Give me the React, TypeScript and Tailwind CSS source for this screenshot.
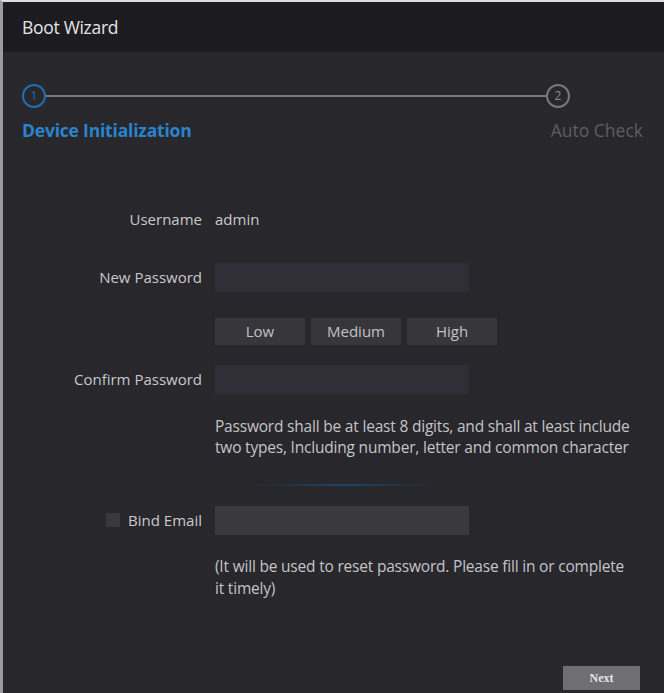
const labelCls = "w-[199px] shrink-0 text-right text-[15px] text-[#c9c9cc]";

function Field({ label, children }: { label: React.ReactNode; children: React.ReactNode }) {
  return (
    <div className="flex items-center">
      <div className={labelCls}>{label}</div>
      <div className="ml-[13px] flex items-center">{children}</div>
    </div>
  );
}

function Stepper() {
  return (
    <div className="pl-[19px] pr-[21px] pt-[32px]">
      <div className="flex items-center">
        <div className="flex h-[24px] w-[24px] items-center justify-center rounded-full border-2 border-[#1f6fae] text-[12px] text-[#1f6fae]">
          1
        </div>
        <div className="h-[2px] w-[500px] bg-[#77777c]" />
        <div className="flex h-[24px] w-[24px] items-center justify-center rounded-full border-2 border-[#77777c] text-[12px] text-[#8a8a8e]">
          2
        </div>
      </div>
      <div className="mt-[9px] flex items-center justify-between">
        <span className="text-[17.5px] font-bold tracking-[-0.2px] text-[#2a84cc]">Device Initialization</span>
        <span className="text-[17.5px] text-[#5d5d62]">Auto Check</span>
      </div>
    </div>
  );
}

export default function App() {
  const strength = ["Low", "Medium", "High"];

  return (
    <div
      className="flex h-[693px] w-[664px] flex-col border-t-2 border-l-[3px] border-t-[#dcdcdc] border-l-[#9c9c9f] bg-[#28272c]"
      style={{ fontFamily: '"Open Sans", "Liberation Sans", sans-serif' }}
    >
      <header className="flex h-[50px] shrink-0 items-center bg-[#1c1b1f] px-[19px]">
        <h1 className="text-[17.5px] tracking-[-0.3px] text-[#e4e4e6]">Boot Wizard</h1>
      </header>

      <Stepper />

      <main className="mt-[65px] flex flex-1 flex-col">
        <Field label="Username">
          <span className="text-[15px] text-[#c9c9cc]">admin</span>
        </Field>

        <div className="mt-[32px]">
          <Field label="New Password">
            <div className="h-[29px] w-[254px] bg-[#302f38]" />
          </Field>
        </div>

        <div className="mt-[26px] flex gap-[6px] pl-[212px]">
          {strength.map((s) => (
            <div
              key={s}
              className="flex h-[27px] w-[90px] items-center justify-center bg-[#37363b] text-[15px] text-[#c2c2c5]"
            >
              {s}
            </div>
          ))}
        </div>

        <div className="mt-[20px]">
          <Field label="Confirm Password">
            <div className="h-[29px] w-[254px] bg-[#302f38]" />
          </Field>
        </div>

        <p className="mt-[22px] pl-[212px] pr-[18px] text-[15.5px] leading-[21px] tracking-[-0.2px] text-[#c4c4c7]">
          Password shall be at least 8 digits, and shall at least include two types, Including number, letter and
          common character
        </p>

        <div className="ml-[247px] mt-[26px] h-[2px] w-[190px] bg-gradient-to-r from-transparent via-[#1d4566] to-transparent" />

        <div className="mt-[20px] flex items-center">
          <div className="flex w-[199px] shrink-0 items-center justify-end gap-[8px]">
            <span className="h-[14px] w-[14px] bg-[#3a393e]" />
            <span className="text-[15px] text-[#c9c9cc]">Bind Email</span>
          </div>
          <div className="ml-[13px] h-[29px] w-[254px] bg-[#3a393e]" />
        </div>

        <p className="mt-[20px] pl-[212px] pr-[30px] text-[15.5px] leading-[22px] tracking-[-0.2px] text-[#c4c4c7]">
          (It will be used to reset password. Please fill in or complete it timely)
        </p>

        <div className="mt-auto flex justify-end pb-[3px] pr-[24px]">
          <button
            type="button"
            className="h-[24px] w-[77px] bg-[#6f6e73] text-[12px] font-bold text-[#e6e6e8]"
            style={{ fontFamily: '"Liberation Serif", serif' }}
          >
            Next
          </button>
        </div>
      </main>
    </div>
  );
}
